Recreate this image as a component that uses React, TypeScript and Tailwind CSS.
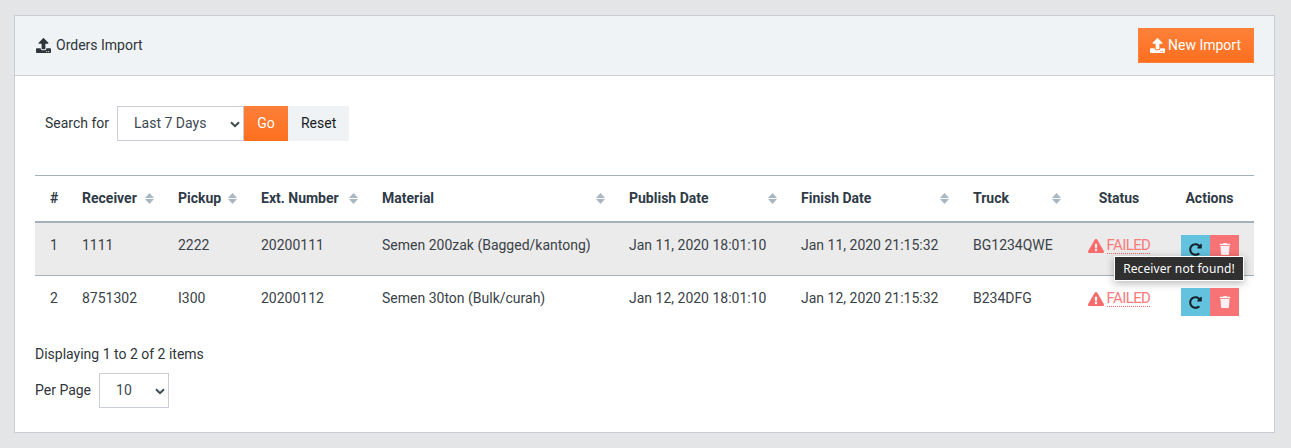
import { FaUpload, FaExclamationTriangle, FaRedoAlt, FaTrash } from "react-icons/fa";

const columns = [
  { label: "#", width: "w-[35px]", sort: false, cls: "pl-[15px]" },
  { label: "Receiver", width: "w-[96px]", sort: true, cls: "px-3" },
  { label: "Pickup", width: "w-[83px]", sort: true, cls: "px-3" },
  { label: "Ext. Number", width: "w-[121px]", sort: true, cls: "px-3" },
  { label: "Material", width: "w-[247px]", sort: true, cls: "px-3" },
  { label: "Publish Date", width: "w-[172px]", sort: true, cls: "px-3" },
  { label: "Finish Date", width: "w-[172px]", sort: true, cls: "px-3" },
  { label: "Truck", width: "w-[112px]", sort: true, cls: "px-3" },
  { label: "Status", width: "w-[92px]", sort: false, cls: "text-center" },
  { label: "Actions", width: "w-[89px]", sort: false, cls: "text-center" },
];

const rows = [
  ["1", "1111", "2222", "20200111", "Semen 200zak (Bagged/kantong)", "Jan 11, 2020 18:01:10", "Jan 11, 2020 21:15:32", "BG1234QWE"],
  ["2", "8751302", "I300", "20200112", "Semen 30ton (Bulk/curah)", "Jan 12, 2020 18:01:10", "Jan 12, 2020 21:15:32", "B234DFG"],
];

function Chevron() {
  return (
    <svg className="absolute right-[3px] top-[14px]" width="10" height="7" viewBox="0 0 10 7" fill="none">
      <path d="M1 1.2l4 4 4-4" stroke="#3e4a52" strokeWidth="2" />
    </svg>
  );
}

function SortIcon() {
  return (
    <svg className="shrink-0" width="9" height="11" viewBox="0 0 9 11" fill="#a9b7c3">
      <path d="M4.5 0L9 5H0z" />
      <path d="M4.5 11L0 6h9z" />
    </svg>
  );
}

export default function App() {
  return (
    <div className="min-h-[448px] bg-[#e4e5e6] pl-[14px] pr-[16px] pt-[15px] font-['Roboto',sans-serif] text-[14px] leading-[21px] text-[#23282c]">
      <div className="h-[418px] border border-[#c8ced3] bg-white">
        {/* --- Header --- */}
        <div className="flex h-[60px] items-center justify-between border-b border-[#c8ced3] bg-[#f0f3f5] pl-[21px] pr-5">
          <div className="flex items-center gap-[5px] text-[#2f353a]">
            <FaUpload className="text-[15px]" />
            <span>Orders Import</span>
          </div>
          <button className="flex h-[35px] w-[116px] items-center justify-center gap-[3px] border border-[#fd7f3a] bg-gradient-to-b from-[#fd8038] to-[#fd6f1e] pr-[1px] text-[14px] text-white">
            <FaUpload className="text-[15px]" />
            New Import
          </button>
        </div>

        <div className="pl-5 pr-5 pt-[30px]">
          {/* --- Filter --- */}
          <div className="flex h-[35px] items-center pl-[10px]">
            <span className="mr-2 text-[#2f353a]">Search for</span>
            <div className="relative h-[35px] w-[127px] border border-[#c8ced3] bg-white pl-4 pt-[6px] text-[#3e4a52]">
              Last 7 Days
              <Chevron />
            </div>
            <button className="h-[35px] w-[44px] bg-gradient-to-b from-[#fd8038] to-[#fd6f1e] text-white">Go</button>
            <button className="h-[35px] w-[61px] bg-[#f0f3f5] text-[#151b1e]">Reset</button>
          </div>

          {/* --- Table --- */}
          <table className="mt-[34px] w-[1219px] table-fixed border-separate border-spacing-0">
            <thead>
              <tr>
                {columns.map((col) => (
                  <th
                    key={col.label}
                    className={`${col.width} ${col.cls} h-[48px] border-t border-b-2 border-t-[#a4b1bb] border-b-[#a4b1bb] text-left font-bold text-[#2f3b47]`}
                  >
                    {col.sort ? (
                      <div className="flex items-center justify-between">
                        <span>{col.label}</span>
                        <SortIcon />
                      </div>
                    ) : (
                      <span className={col.cls === "text-center" ? "block text-center" : ""}>{col.label}</span>
                    )}
                  </th>
                ))}
              </tr>
            </thead>
            <tbody>
              {rows.map((row, i) => {
                const rowCls = i === 0 ? "h-[53px] border-b border-[#a4b1bb] pt-3 align-top" : "h-[53px] pt-3 align-top";
                return (
                  <tr key={row[0]} className={i === 0 ? "bg-[#ebebeb]" : ""}>
                    {row.map((cell, j) => (
                      <td key={j} className={`${columns[j].cls} ${rowCls} text-[#3a4248]`}>{cell}</td>
                    ))}
                    <td className={`${rowCls} text-center`}>
                      <span className="inline-flex h-[21px] items-start gap-[3px] text-[#fb7a7b]">
                        <FaExclamationTriangle className="mt-[3px] text-[16px] text-[#fb6a6b]" />
                        <span className="h-[19px] border-b border-dotted border-[#fb6a6b] text-[15px] font-normal leading-[21px] tracking-[-0.6px]">FAILED</span>
                      </span>
                    </td>
                    <td className={rowCls}>
                      <div className="relative flex justify-center pl-[1px]">
                        <button className="flex h-7 w-[29px] items-center justify-center bg-[#63c2de] text-[#14222b]">
                          <FaRedoAlt className="text-[13px]" />
                        </button>
                        <button className="flex h-7 w-[29px] items-center justify-center bg-[#f87375] text-[#fff0f4]">
                          <FaTrash className="text-[12px]" />
                        </button>
                        {i === 0 && (
                          <div className="absolute left-[-51px] top-[21px] flex h-[25px] w-[130px] items-center justify-center whitespace-nowrap border border-white bg-[#303030] font-['Noto_Sans',sans-serif] text-[12px] leading-[18px] tracking-[0.1px] text-white shadow-[0_2px_8px_rgba(0,0,0,0.3)]">
                            Receiver not found!
                          </div>
                        )}
                      </div>
                    </td>
                  </tr>
                );
              })}
            </tbody>
          </table>

          {/* --- Pagination --- */}
          <div className="mt-[15px] text-[#2f353a]">Displaying 1 to 2 of 2 items</div>
          <div className="mt-[8px] flex items-center">
            <span className="mr-2 text-[#2f353a]">Per Page</span>
            <div className="relative h-[35px] w-[70px] border border-[#c8ced3] pl-4 pt-[6px] text-[#3e4a52]">
              10
              <Chevron />
            </div>
          </div>
        </div>
      </div>
    </div>
  );
}
